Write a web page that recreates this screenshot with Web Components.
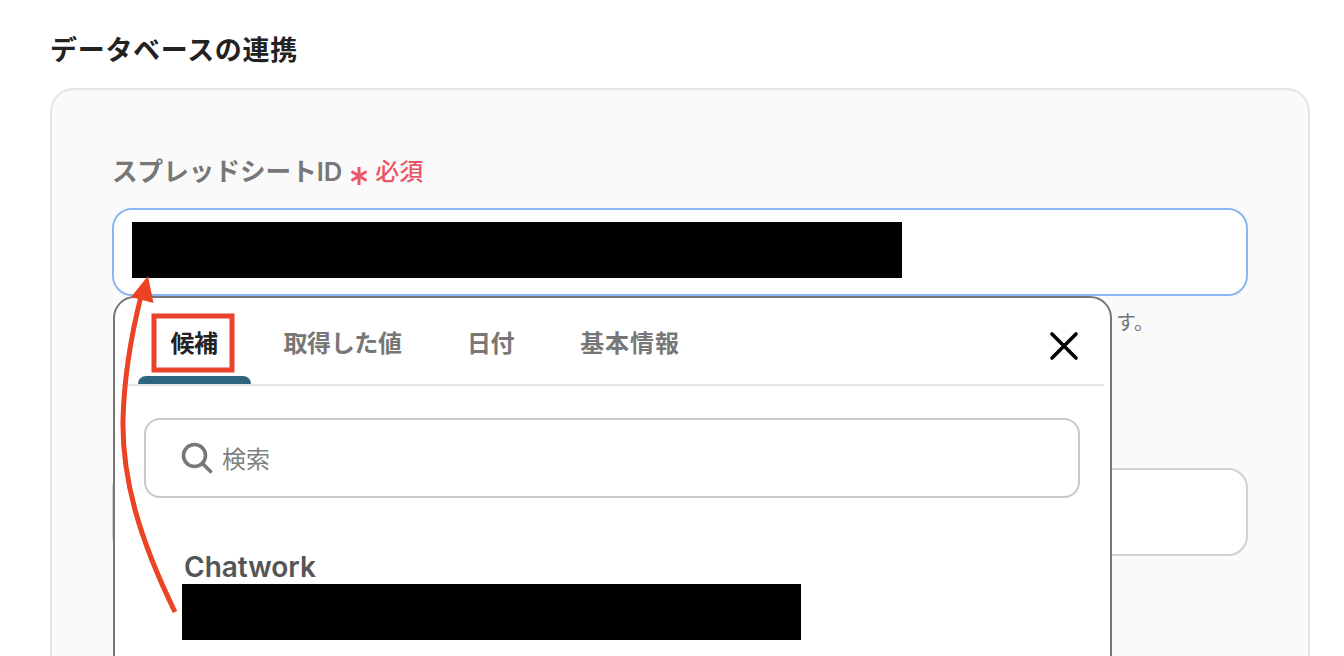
<!DOCTYPE html>
<html lang="ja">
<head>
<meta charset="utf-8">
<title>データベースの連携</title>
<style>
  html, body { margin: 0; height: 656px; overflow: hidden; background: #fff; }
  body { font-family: Inter, "Noto Sans CJK JP", sans-serif; }
</style>
</head>
<body>
<db-page>
  <span slot="title">データベースの連携</span>
  <db-field label="スプレッドシートID" required active hint="す。"></db-field>
  <db-field></db-field>
  <db-picker slot="overlay"></db-picker>
  <db-annotation slot="overlay"></db-annotation>
</db-page>

<script>
'use strict'

// ページ全体: 見出しとカード、上に重なるものは overlay スロットへ
class DbPage extends HTMLElement {
  constructor() {
    super()
    this.attachShadow({ mode: 'open' }).innerHTML = `
      <style>
        :host { display: block; position: relative; height: 656px; overflow: hidden; padding: 0 34px 0 50px; box-sizing: border-box; }
        h2 { margin: 0; padding-top: 32px; height: 88px; box-sizing: border-box; font-size: 27px; line-height: 38px; font-weight: 600; color: #222; letter-spacing: .7px; white-space: nowrap; }
        .card { height: 700px; box-sizing: border-box; padding: 64px 60px 0; background: #fafafa; border: 2px solid #e3e5e8; border-radius: 24px; }
      </style>
      <h2><slot name="title"></slot></h2>
      <div class="card"><slot></slot></div>
      <slot name="overlay"></slot>`
  }
}

// ラベル + 入力欄
class DbField extends HTMLElement {
  constructor() {
    super()
    this.attachShadow({ mode: 'open' })
  }
  connectedCallback() {
    const label = this.getAttribute('label')
    const hint = this.getAttribute('hint')
    const req = this.hasAttribute('required')
    this.shadowRoot.innerHTML = `
      <style>
        :host { display: block; }
        .label { height: 54px; display: flex; align-items: flex-start; gap: 8px; color: #777; font-size: 25.600px; line-height: 36px; font-weight: 600; white-space: nowrap; }
        .mark { color: #ea5666; display: flex; align-items: center; gap: 7px; font-size: 24px; font-weight: 500; }
        .mark svg { width: 18px; height: 18px; margin-top: 8px; }
        .box { height: 88px; box-sizing: border-box; background: #fff; border-radius: 20px; border: 2px solid #cdd1d6; padding: 12px 18px; }
        :host([active]) .box { border-color: #8ab6f2; }
        .hint { height: 172px; box-sizing: border-box; padding: 13px 0 0 1004px; font-size: 20px; line-height: 28px; color: #70757c; }
      </style>
      ${label ? `<div class="label"><span>${label}</span>${req ? `<span class="mark"><svg viewBox="0 0 18 18"><path d="M9 0v18M1.5 4.5l15 9M16.500 4.500l-15 9" stroke="#ea5666" stroke-width="3" fill="none"/></svg>必須</span>` : ''}</div>` : ''}
      <div class="box">${this.hasAttribute('active') ? '<div style="width:770px;height:56px;background:#000"></div>' : ''}</div>
      ${hint ? `<div class="hint">${hint}</div>` : ''}`
  }
}

// 候補ポップアップ
class DbPicker extends HTMLElement {
  constructor() {
    super()
    this.attachShadow({ mode: 'open' }).innerHTML = `
      <style>
        :host { display: block; position: absolute; left: 112.500px; top: 296px; width: 999.500px; height: 420px; box-sizing: border-box; background: #fff; border: 2px solid #777; border-radius: 22px; color: #777; }
        .tabs { height: 88px; margin: 0 6px; box-sizing: border-box; border-bottom: 2px solid #e5e5e5; display: flex; padding-left: 17.500px; position: relative; }
        .tab { padding: 26px 33px 0; font-size: 24px; line-height: 40px; font-weight: 600; white-space: nowrap; box-sizing: border-box; height: 86px; position: relative; letter-spacing: -.4px; }
        .tab.on { color: #222; font-weight: 700; padding: 26px 33.400px 0; text-indent: -1px; }
        .tab.on::after { content: ""; position: absolute; left: 0; right: 0; bottom: 0; height: 8px; background: #2e6680; border-radius: 8px 8px 0 0; }
        .tab:nth-child(2), .tab:nth-child(3) { margin-left: -.5px; }
        .tab:nth-child(4) { letter-spacing: .9px; }
        .close { margin-left: auto; margin-right: 24px; margin-top: 32px; width: 32px; height: 32px; }
        .search { margin: 32px 30px 0 29.500px; height: 80px; box-sizing: border-box; border: 2px solid #c8c8c8; border-radius: 16px; display: flex; align-items: center; padding-left: 33.500px; gap: 8.500px; font-size: 24px; color: #808080; }
        .search svg { width: 34px; height: 34px; flex: none; }
        .search span { margin-bottom: 2px; }
        .item { padding: 52px 0 0 69.500px; }
        .name { font-size: 28px; line-height: 34px; font-weight: 600; color: #555; }
        .redact { width: 619px; height: 56px; background: #000; margin-left: -2px; }
      </style>
      <div class="tabs">
        <div class="tab on">候補</div>
        <div class="tab">取得した値</div>
        <div class="tab">日付</div>
        <div class="tab">基本情報</div>
        <svg class="close" viewBox="0 0 32 32"><path d="M4 4l24 24M28 4L4 28" stroke="#000" stroke-width="3.600" stroke-linecap="round"/></svg>
      </div>
      <div class="search">
        <svg viewBox="0 0 34 34"><circle cx="14.500" cy="14.500" r="11" fill="none" stroke="#777" stroke-width="3.600"/><path d="M23 23l7.500 7.500" stroke="#777" stroke-width="3.600" stroke-linecap="round"/></svg>
        <span>検索</span>
      </div>
      <div class="item">
        <div class="name">Chatwork</div>
        <div class="redact"></div>
      </div>`
  }
}

// 赤い矢印と枠の注釈
class DbAnnotation extends HTMLElement {
  constructor() {
    super()
    this.attachShadow({ mode: 'open' }).innerHTML = `
      <style>
        :host { display: block; position: absolute; inset: 0; pointer-events: none; }
        svg { display: block; width: 1344px; height: 656px; }
      </style>
      <svg viewBox="0 0 1344 656">
        <rect x="154" y="316" width="78" height="54" fill="none" stroke="#e8432a" stroke-width="5"/>
        <path d="M175 612C140 540 122 480 123 420C124 380 130 340 141 296" fill="none" stroke="#ec4324" stroke-width="5"/>
        <path d="M148 276L131 297L153.500 303Z" fill="#ec4324"/>
      </svg>`
  }
}

customElements.define('db-page', DbPage)
customElements.define('db-field', DbField)
customElements.define('db-picker', DbPicker)
customElements.define('db-annotation', DbAnnotation)
</script>
</body>
</html>
